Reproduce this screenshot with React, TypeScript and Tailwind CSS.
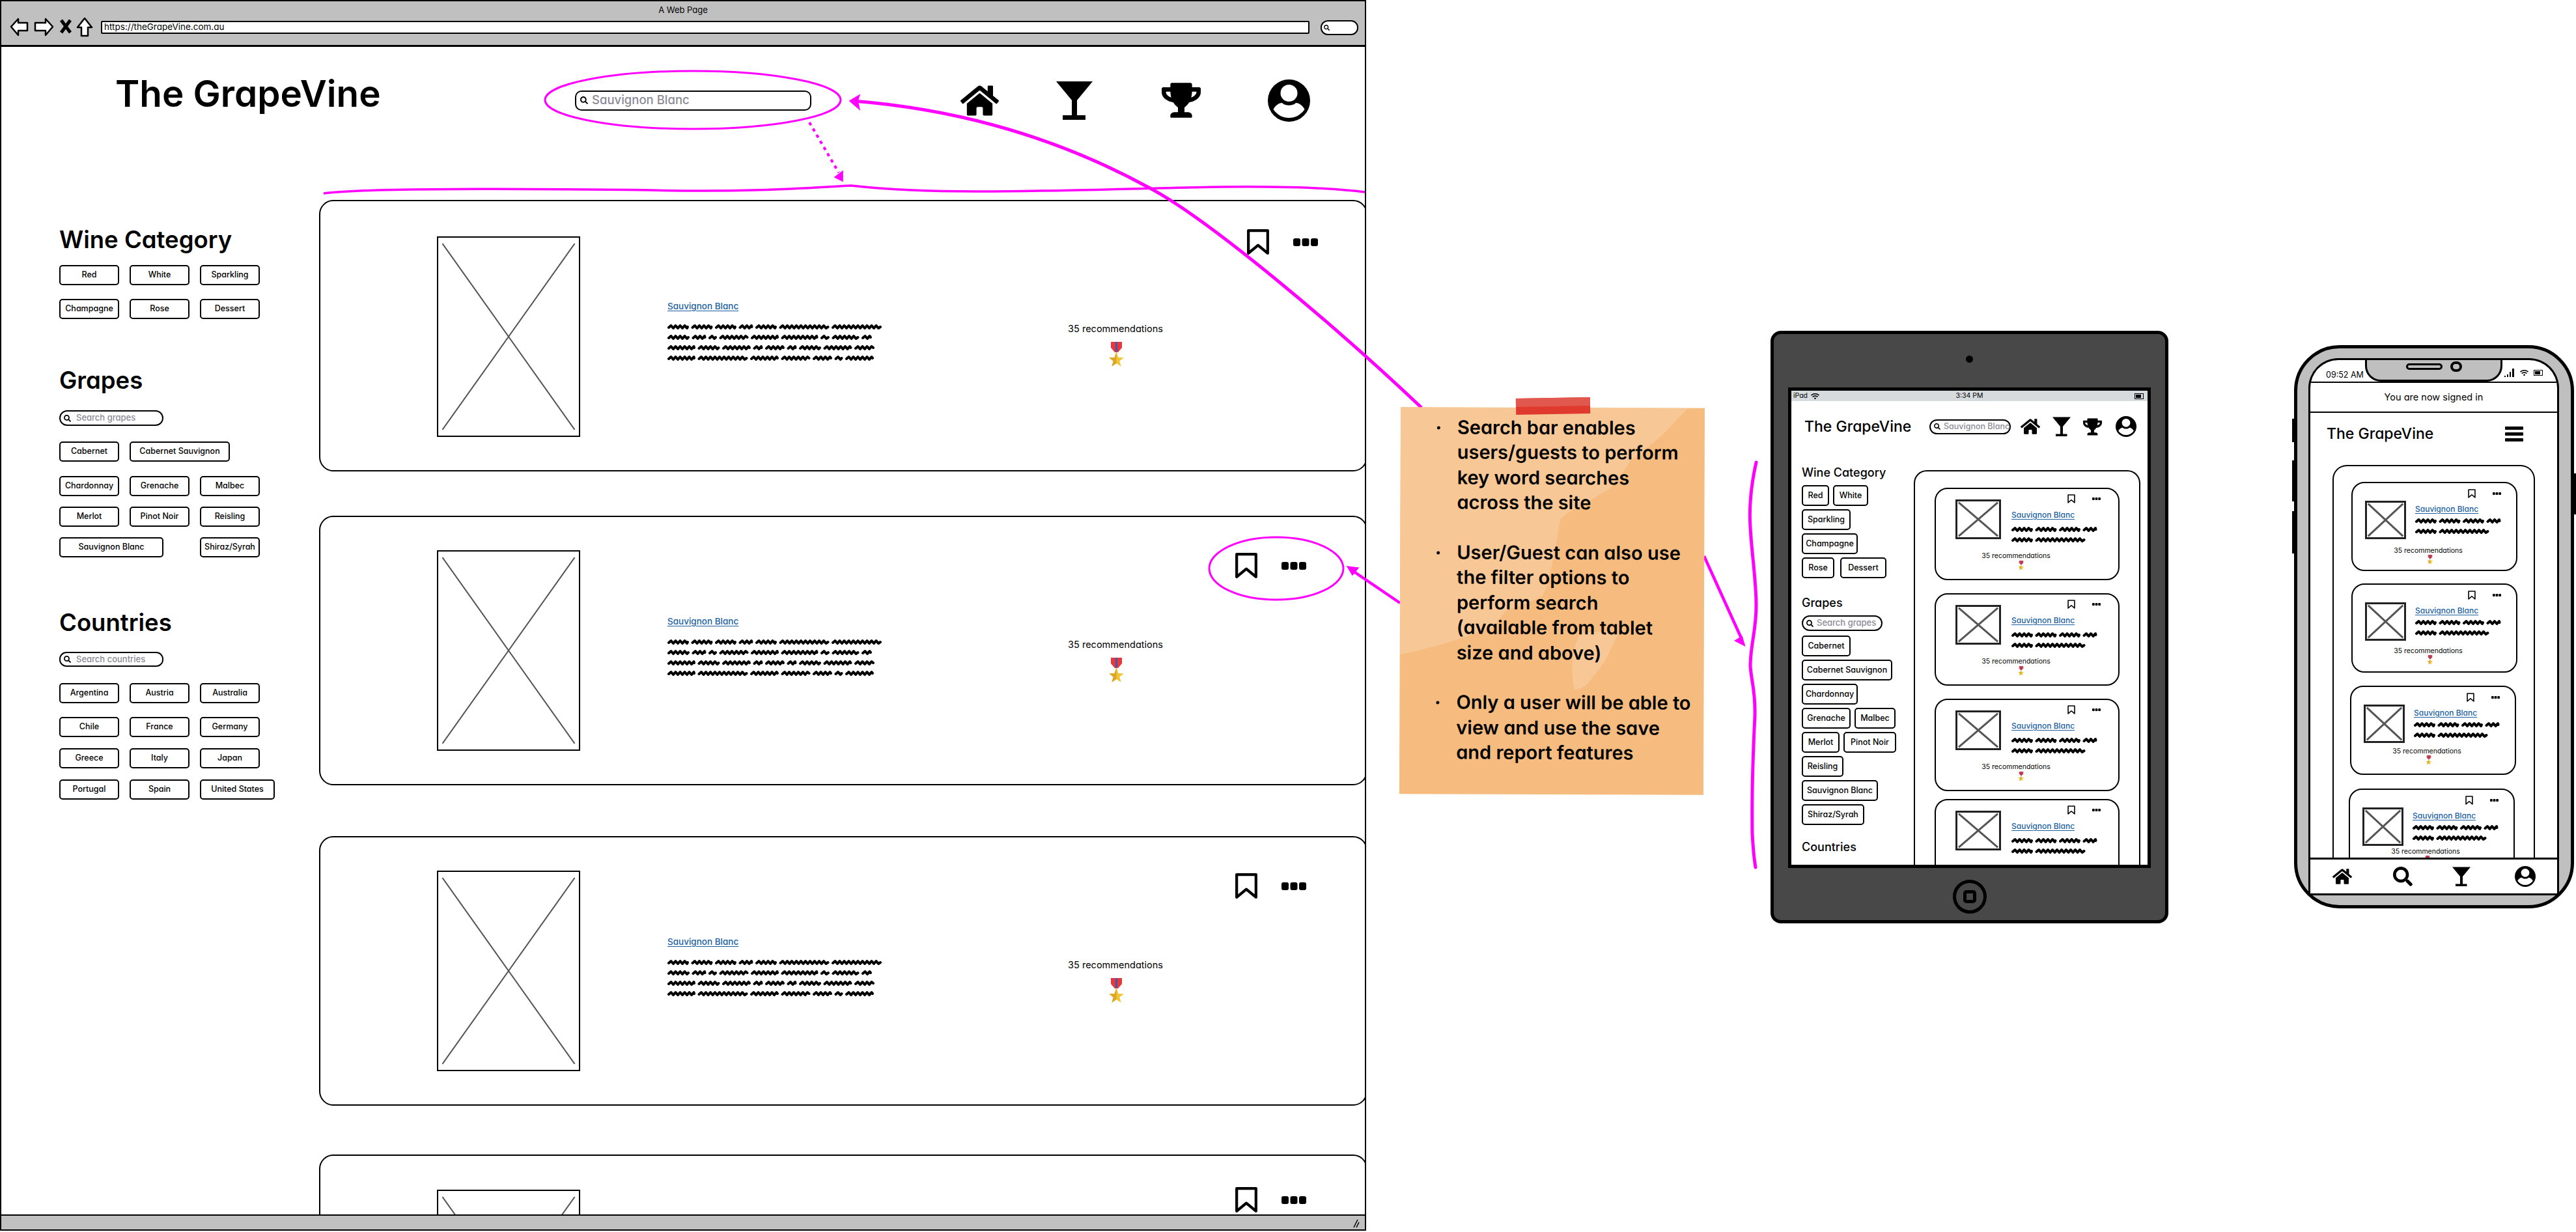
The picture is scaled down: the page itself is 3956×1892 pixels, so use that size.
import { FaHome, FaSearch, FaTrophy, FaWifi } from 'react-icons/fa';

const SCRIBBLE_LINES = [
  [31, 31, 31, 20, 31, 75, 75],
  [32, 20, 11, 43, 41, 55, 12, 40, 14],
  [41, 32, 42, 13, 28, 13, 32, 42, 29],
  [41, 75, 42, 43, 28, 11, 42],
];
const MINI_LINES = [
  [31, 31, 31, 20],
  [31, 75],
];

// blurred "lorem ipsum" line, one short zigzag per word
function Scribble({ words }: { words: number[] }) {
  let x = 2;
  let d = '';
  words.forEach((w) => {
    d += `M${x} 6`;
    let up = true;
    for (let i = 3.5; i < w - 2; i += 3.5) {
      d += `L${x + i} ${up ? 3 : 7}`;
      up = !up;
    }
    d += `L${x + w - 2} 5 `;
    x += w + 5.5;
  });
  return (
    <svg width={x} height="10" className="block">
      <path d={d} fill="none" stroke="black" strokeWidth="4" strokeLinecap="round" strokeLinejoin="round" />
    </svg>
  );
}

function Medal({ className }: { className: string }) {
  return (
    <svg viewBox="0 0 23 40" className={className}>
      <path d="M3 0H20V9L14 16H9L3 9Z" fill="#e8383d" />
      <rect x="10" y="0" width="3" height="15" fill="#3b5ca8" />
      <polygon points="11.5,15 14.4,24 22.9,24.3 16.3,29.6 18.6,37.7 11.5,33 4.4,37.7 6.7,29.6 0.1,24.3 8.6,24" fill="#f3c432" />
      <polygon points="11.5,15 11.5,33 4.4,37.7 6.7,29.6 0.1,24.3 8.6,24" fill="#dca626" />
    </svg>
  );
}

function Bookmark({ className, width = 4 }: { className: string; width?: number }) {
  return (
    <svg viewBox="0 0 34 40" preserveAspectRatio="none" className={className}>
      <path d="M3 3H31V37L17 25L3 37Z" fill="none" stroke="black" strokeWidth={width} strokeLinejoin="round" />
    </svg>
  );
}

function Dots({ className }: { className: string }) {
  return (
    <svg viewBox="0 0 38 12" preserveAspectRatio="none" className={className}>
      <rect x="0" width="11" height="12" rx="3" />
      <rect x="13.5" width="11" height="12" rx="3" />
      <rect x="27" width="11" height="12" rx="3" />
    </svg>
  );
}

function Glass({ className }: { className: string }) {
  return (
    <svg viewBox="0 0 60 60" className={className}>
      <path d="M2 1H58L34 30V53H47V60H12V53H26V30Z" />
    </svg>
  );
}

function UserIcon({ className }: { className: string }) {
  return (
    <svg viewBox="0 0 65 65" className={className}>
      <circle cx="32.5" cy="32.5" r="32.5" />
      <ellipse cx="32.5" cy="21" rx="13" ry="13" fill="white" />
      <path d="M8.5 46C12 39 18 36 22 36C26 41 39 41 43 36C47 36 53 39 56.5 46C50 55 42 59 32.5 59C23 59 15 55 8.5 46Z" fill="white" />
    </svg>
  );
}

function Placeholder({ className, line }: { className: string; line: number }) {
  return (
    <div className={`relative shrink-0 bg-white ${className}`}>
      <svg viewBox="0 0 100 100" preserveAspectRatio="none" className="absolute inset-0 h-full w-full">
        <path d="M3 3L97 97M97 3L3 97" stroke="#555" strokeWidth={line} vectorEffect="non-scaling-stroke" fill="none" />
      </svg>
    </div>
  );
}

function Chip({ label, w = 'w-[92px]', h = 'h-[31px]', extra = '' }: { label: string; w?: string; h?: string; extra?: string }) {
  return (
    <div className={`flex shrink-0 items-center justify-center rounded-[5px] border-2 border-black text-[12.5px] font-medium whitespace-nowrap ${w} ${h} ${extra}`}>
      {label}
    </div>
  );
}

function SearchPill({ text, className, size, icon }: { text: string; className: string; size: string; icon: number }) {
  return (
    <div className={`flex items-center border-2 border-black bg-white font-medium text-[#8b8b96] whitespace-nowrap ${className}`}>
      <FaSearch size={icon} className="shrink-0 text-black" />
      <span className={size}>{text}</span>
    </div>
  );
}

type CardPos = { wrap: string; image: string; text: string; rec: string; icons: string; clipped?: boolean };

function DesktopCard({ wrap, image, text, rec, icons, clipped }: CardPos) {
  return (
    <div className={`flex w-[1610px] shrink-0 items-start rounded-[22px] border-2 border-black bg-white ${wrap}`}>
      <Placeholder className={`ml-[179px] h-[308px] w-[220px] border-2 border-black ${image}`} line={2} />
      <div className={`ml-[134px] w-[327px] shrink-0 ${text}`}>
        {!clipped && (
          <>
            <a className="block text-[13.5px] leading-[18px] font-medium text-[#1b5fa3] underline underline-offset-2">Sauvignon Blanc</a>
            <div className="mt-[18px] flex flex-col gap-[6px]">
              {SCRIBBLE_LINES.map((line, i) => (
                <Scribble key={i} words={line} />
              ))}
            </div>
          </>
        )}
      </div>
      <div className={`ml-[290px] flex w-[142px] shrink-0 flex-col items-center ${rec}`}>
        {!clipped && (
          <>
            <div className="text-[14.5px] leading-[20px] whitespace-nowrap">35 recommendations</div>
            <Medal className="mt-[10px] ml-[3px] h-[40px] w-[23px]" />
          </>
        )}
      </div>
      <div className={`flex shrink-0 items-center ${icons}`}>
        <Bookmark className="h-[41px] w-[36px]" />
        <Dots className="ml-[36px] h-[12px] w-[38px]" />
      </div>
    </div>
  );
}

function MiniCard({ card, image, gap, iconsRow, linkGap, textGap, recBox, medal, hideRec }: {
  card: string; image: string; gap: string; iconsRow: string; linkGap: string; textGap: string; recBox: string; medal: string; hideRec?: boolean;
}) {
  return (
    <div className={`shrink-0 rounded-[20px] border-2 border-black bg-white ${card}`}>
      <div className="flex items-start">
        <Placeholder className={`border-[3px] border-[#222] ${image}`} line={3} />
        <div className={gap}>
          <div className={`flex items-center ${iconsRow}`}>
            <Bookmark className="h-[14px] w-[12px]" width={4.5} />
            <Dots className="ml-[26px] h-[4px] w-[13px]" />
          </div>
          <a className={`block text-[12px] leading-[17px] font-medium text-[#1b5fa3] underline underline-offset-2 ${linkGap}`}>Sauvignon Blanc</a>
          <div className={`flex flex-col gap-[6px] ${textGap}`}>
            {MINI_LINES.map((line, i) => (
              <Scribble key={i} words={line} />
            ))}
          </div>
        </div>
      </div>
      {!hideRec && (
        <div className={`flex w-[96px] flex-col items-center ${recBox}`}>
          <div className="text-[10.5px] leading-[14px] whitespace-nowrap">35 recommendations</div>
          <Medal className={`h-[15px] w-[10px] ${medal}`} />
        </div>
      )}
    </div>
  );
}

function BrowserWindow() {
  const positions: CardPos[] = [
    { wrap: 'h-[417px] mt-[71px]', image: 'mt-[54px]', text: 'mt-[152px]', rec: 'mt-[186px]', icons: 'ml-[130px] mt-[42px]' },
    { wrap: 'h-[414px] mt-[68px]', image: 'mt-[51px]', text: 'mt-[151px]', rec: 'mt-[186px]', icons: 'ml-[112px] mt-[54px]' },
    { wrap: 'h-[414px] mt-[78px]', image: 'mt-[51px]', text: 'mt-[151px]', rec: 'mt-[186px]', icons: 'ml-[112px] mt-[54px]' },
    { wrap: 'h-[414px] mt-[75px]', image: 'mt-[52px]', text: 'mt-[151px]', rec: 'mt-[186px]', icons: 'ml-[112px] mt-[47px]', clipped: true },
  ];
  const heading = 'text-[36.5px] leading-[40px] font-semibold';
  return (
    <div className="absolute top-0 left-0 flex h-[1890px] w-[2098px] flex-col overflow-hidden border-2 border-black bg-white">
      {/* browser chrome */}
      <div className="h-[70px] shrink-0 border-b-[3px] border-black bg-[#c0c0c0]">
        <div className="pt-[3px] text-center text-[13px] leading-[20px]">A Web Page</div>
        <div className="mt-[2px] flex items-center pl-[13px]">
          <svg width="140" height="30" viewBox="0 0 140 30" className="shrink-0">
            <path d="M2 14L13 2V8H27V20H13V27Z" fill="white" stroke="black" strokeWidth="2.5" strokeLinejoin="round" />
            <path d="M66 14L55 2V8H39V20H55V27Z" fill="white" stroke="black" strokeWidth="2.5" strokeLinejoin="round" />
            <path d="M79 4L93 23M93 4L79 23" stroke="black" strokeWidth="5" />
            <path d="M115 1L126 15H120V28H110V15H104Z" fill="white" stroke="black" strokeWidth="2.5" strokeLinejoin="round" />
          </svg>
          <div className="flex h-[20px] w-[1856px] items-center rounded-[2px] border-2 border-black bg-white pl-[3px] text-[13.5px] leading-none">
            https://theGrapeVine.com.au
          </div>
          <div className="ml-[17px] flex h-[23px] w-[58px] items-center rounded-[11px] border-2 border-black bg-white pl-[3px]">
            <FaSearch size={9} />
          </div>
        </div>
      </div>

      <div className="min-h-0 flex-1 overflow-hidden">
        <header className="flex h-[164px] items-center">
          <h1 className="mb-[20px] ml-[175px] w-[706px] shrink-0 text-[56.5px] leading-none font-semibold whitespace-nowrap">The GrapeVine</h1>
          <SearchPill text="Sauvignon Blanc" className="h-[31px] w-[363px] shrink-0 rounded-[10px] pl-[6px]" size="ml-[6px] text-[18.5px]" icon={12} />
          <FaHome size={59} className="ml-[229px] shrink-0" />
          <Glass className="ml-[86px] h-[60px] w-[60px] shrink-0" />
          <FaTrophy size={60} className="ml-[104px] shrink-0" />
          <UserIcon className="ml-[103px] h-[65px] w-[65px] shrink-0" />
        </header>

        <div className="flex items-start">
          <aside className="w-[488px] shrink-0 pt-[112px] pl-[89px]">
            <h2 className={heading}>Wine Category</h2>
            <div className="mt-[19px] flex gap-4"><Chip label="Red" /><Chip label="White" /><Chip label="Sparkling" /></div>
            <div className="mt-[21px] flex gap-4"><Chip label="Champagne" /><Chip label="Rose" /><Chip label="Dessert" /></div>

            <h2 className={`mt-[74px] ${heading}`}>Grapes</h2>
            <SearchPill text="Search grapes" className="mt-[26px] h-[24px] w-[160px] rounded-[12px] pl-[5px]" size="ml-[8px] text-[13px]" icon={11} />
            <div className="mt-[24px] flex gap-4"><Chip label="Cabernet" /><Chip label="Cabernet Sauvignon" w="w-[154px]" /></div>
            <div className="mt-[22px] flex gap-4"><Chip label="Chardonnay" /><Chip label="Grenache" /><Chip label="Malbec" /></div>
            <div className="mt-[16px] flex gap-4"><Chip label="Merlot" /><Chip label="Pinot Noir" /><Chip label="Reisling" /></div>
            <div className="mt-[16px] flex gap-4"><Chip label="Sauvignon Blanc" w="w-[160px]" /><Chip label="Shiraz/Syrah" extra="ml-10" /></div>

            <h2 className={`mt-[80px] ${heading}`}>Countries</h2>
            <SearchPill text="Search countries" className="mt-[25px] h-[23px] w-[160px] rounded-[11px] pl-[5px]" size="ml-[8px] text-[13px]" icon={11} />
            <div className="mt-[25px] flex gap-4"><Chip label="Argentina" /><Chip label="Austria" /><Chip label="Australia" /></div>
            <div className="mt-[21px] flex gap-4"><Chip label="Chile" /><Chip label="France" /><Chip label="Germany" /></div>
            <div className="mt-[17px] flex gap-4"><Chip label="Greece" /><Chip label="Italy" /><Chip label="Japan" /></div>
            <div className="mt-[17px] flex gap-4"><Chip label="Portugal" /><Chip label="Spain" /><Chip label="United States" w="w-[115px]" /></div>
          </aside>
          <main className="flex flex-col">
            {positions.map((p, i) => (
              <DesktopCard key={i} {...p} />
            ))}
          </main>
        </div>
      </div>

      <div className="relative h-[23px] shrink-0 border-t-[2px] border-black bg-[#c0c0c0]">
        <svg width="10" height="14" className="absolute right-[8px] bottom-[2px]">
          <path d="M1 13L7 1M5 13L9 5" stroke="black" strokeWidth="1.5" />
        </svg>
      </div>
    </div>
  );
}

function Tablet() {
  const miniCards = ['mt-[25px]', 'mt-[20px]', 'mt-[20px]', 'mt-[12px]'];
  const row = 'mt-[5px] flex gap-1.5';
  const tall = 'h-[32px]';
  return (
    <div className="absolute top-[508px] left-[2719px] flex h-[910px] w-[611px] flex-col items-center rounded-[16px] border-[5px] border-black bg-[#484848]">
      <div className="mt-[33px] h-[11px] w-[11px] rounded-full bg-black" />
      <div className="mt-[38px] flex h-[738px] w-[557px] flex-col overflow-hidden border-[5px] border-black bg-white">
        <div className="flex h-[16px] shrink-0 items-center justify-between bg-[#d6dbde] px-[3px] text-[10.5px]">
          <div className="flex w-[60px] items-center gap-[5px]">iPad<FaWifi size={13} /></div>
          <div>3:34 PM</div>
          <div className="flex w-[60px] justify-end pr-[3px]">
            <div className="h-[9px] w-[14px] border border-black p-px"><div className="h-full w-[8px] bg-black" /></div>
          </div>
        </div>

        <div className="mt-[23px] flex h-[32px] shrink-0 items-center">
          <div className="ml-[20px] w-[192px] shrink-0 text-[23px] font-medium whitespace-nowrap">The GrapeVine</div>
          <SearchPill text="Sauvignon Blanc" className="h-[23px] w-[125px] shrink-0 rounded-[12px] pl-[5px]" size="ml-[5px] text-[12.5px]" icon={10} />
          <FaHome size={30} className="ml-[15px] shrink-0" />
          <Glass className="ml-[18px] h-[30px] w-[30px] shrink-0" />
          <FaTrophy size={29} className="ml-[18px] shrink-0" />
          <UserIcon className="ml-[21px] h-[32px] w-[32px] shrink-0" />
        </div>

        <div className="mt-[42px] flex min-h-0 flex-1 items-start overflow-hidden">
          <aside className="w-[188px] shrink-0 pl-[16px]">
            <h2 className="text-[18px] leading-[26px] font-medium whitespace-nowrap">Wine Category</h2>
            <div className="mt-[6px] flex gap-1.5"><Chip label="Red" w="w-[42px]" h={tall} /><Chip label="White" w="w-[54px]" h={tall} /></div>
            <div className={row}><Chip label="Sparkling" w="w-[75px]" h={tall} /></div>
            <div className={row}><Chip label="Champagne" w="w-[86px]" h={tall} /></div>
            <div className={row}><Chip label="Rose" w="w-[50px]" h={tall} /><Chip label="Dessert" w="w-[71px]" h={tall} extra="ml-[3px]" /></div>

            <h2 className="mt-[25px] text-[18px] leading-[26px] font-medium">Grapes</h2>
            <SearchPill text="Search grapes" className="mt-[6px] h-[24px] w-[124px] rounded-[12px] pl-[5px]" size="ml-[5px] text-[13px]" icon={11} />
            <div className="mt-[7px] flex"><Chip label="Cabernet" w="w-[75px]" h={tall} /></div>
            <div className={row}><Chip label="Cabernet Sauvignon" w="w-[139px]" h={tall} /></div>
            <div className={row}><Chip label="Chardonnay" w="w-[86px]" h={tall} /></div>
            <div className={row}><Chip label="Grenache" w="w-[75px]" h={tall} /><Chip label="Malbec" w="w-[63px]" h={tall} /></div>
            <div className={row}><Chip label="Merlot" w="w-[58px]" h={tall} /><Chip label="Pinot Noir" w="w-[81px]" h={tall} /></div>
            <div className={row}><Chip label="Reisling" w="w-[64px]" h={tall} /></div>
            <div className={row}><Chip label="Sauvignon Blanc" w="w-[117px]" h={tall} /></div>
            <div className={row}><Chip label="Shiraz/Syrah" w="w-[96px]" h={tall} /></div>

            <h2 className="mt-[21px] text-[18px] leading-[26px] font-medium">Countries</h2>
          </aside>
          <div className="mt-[9px] w-[348px] shrink-0 rounded-t-[20px] border-2 border-b-0 border-black pl-[30px] pb-[100px]">
            {miniCards.map((mt, i) => (
              <MiniCard
                key={i}
                card={`h-[142px] w-[284px] pl-[30px] pt-[8px] ${mt}`}
                image="mt-[8px] h-[61px] w-[70px]"
                gap="ml-[16px] w-[150px]"
                iconsRow="pl-[86px]"
                linkGap="mt-[9px]"
                textGap="mt-[9px]"
                recBox="ml-[45px] mt-[13px]"
                medal="ml-[16px]"
                hideRec={i === 3}
              />
            ))}
          </div>
        </div>
      </div>
      <div className="mt-[18px] flex h-[52px] w-[52px] items-center justify-center rounded-full border-[5px] border-black">
        <div className="h-[20px] w-[20px] rounded-[5px] border-[5px] border-black" />
      </div>
    </div>
  );
}

function Phone() {
  const cards = [
    { pos: 'mt-[24px] ml-[27px]', rec: 'mt-[11px]' },
    { pos: 'mt-[19px] ml-[27px]', rec: 'mt-[9px]' },
    { pos: 'mt-[20px] ml-[25px]', rec: 'mt-[6px]' },
    { pos: 'mt-[21px] ml-[23px]', rec: 'mt-[2px]' },
  ];
  return (
    <div className="absolute top-[530px] left-[3523px] h-[865px] w-[430px] rounded-[70px] border-[5px] border-black bg-[#bfbfbf] pt-[15px] pl-[17px]">
      {/* side buttons */}
      <div className="absolute top-[108px] left-[-8px] h-[36px] w-[3px] bg-black" />
      <div className="absolute top-[172px] left-[-8px] h-[63px] w-[3px] bg-black" />
      <div className="absolute top-[250px] left-[-8px] h-[65px] w-[3px] bg-black" />
      <div className="absolute top-[192px] right-[-8px] h-[63px] w-[3px] bg-black" />

      <div className="relative flex h-[825px] w-[385px] flex-col overflow-hidden rounded-t-[46px] border-[3px] border-b-0 border-black bg-white">
        <div className="grid h-[33px] shrink-0 grid-cols-[84px_211px_1fr]">
          <div className="pt-[15px] pl-[24px] text-[12.5px] leading-[16px] whitespace-nowrap">09:52 AM</div>
          <div className="-mt-[3px] flex h-[36px] items-center justify-center gap-[12px] rounded-b-[24px] border-[3px] border-t-0 border-black bg-[#bfbfbf] pb-[8px]">
            <div className="h-[10px] w-[56px] rounded-full border-[3px] border-black" />
            <div className="h-[16px] w-[18px] rounded-full border-[4px] border-black" />
          </div>
          <div className="flex items-center gap-[8px] pt-[5px] pl-[3px]">
            <svg width="16" height="13" viewBox="0 0 16 13"><path d="M0 11h2v2H0zM4 9h2v4H4zM8 5h2v8H8zM12 0h3v13h-3z" /></svg>
            <FaWifi size={13} />
            <div className="h-[9px] w-[14px] border border-black p-px"><div className="h-full w-[8px] bg-black" /></div>
          </div>
        </div>
        <div className="flex h-[48px] shrink-0 items-center justify-center border-y-2 border-black text-[14.5px]">You are now signed in</div>
        <div className="flex h-[64px] shrink-0 items-center justify-between pr-[52px] pl-[25px]">
          <div className="text-[23px] font-medium whitespace-nowrap">The GrapeVine</div>
          <div className="flex w-[28px] flex-col gap-[4px]">
            <div className="h-[5px] rounded-[1px] bg-black" />
            <div className="h-[5px] rounded-[1px] bg-black" />
            <div className="h-[5px] rounded-[1px] bg-black" />
          </div>
        </div>
        <div className="min-h-0 flex-1 overflow-hidden pl-[34px]">
          <div className="mt-[16px] w-[311px] rounded-t-[22px] border-2 border-b-0 border-black pb-[100px]">
            {cards.map((c, i) => (
              <MiniCard
                key={i}
                card={`h-[137px] w-[255px] pl-[19px] pt-[9px] ${c.pos}`}
                image="mt-[18px] h-[59px] w-[63px]"
                gap="ml-[14px] w-[150px]"
                iconsRow="pl-[81px]"
                linkGap="mt-[8px]"
                textGap="mt-[5px]"
                recBox={`ml-[49px] ${c.rec}`}
                medal="ml-[6px] -mt-[1px]"
              />
            ))}
          </div>
        </div>
        <div className="flex h-[58px] shrink-0 items-center border-y-[3px] border-black bg-white">
          <FaHome size={30} className="ml-[34px]" />
          <FaSearch size={30} className="ml-[63px]" />
          <Glass className="ml-[60px] h-[30px] w-[30px]" />
          <UserIcon className="ml-[67px] h-[32px] w-[32px]" />
        </div>
      </div>
    </div>
  );
}

function StickyNote() {
  const notes = [
    ['Search bar enables', 'users/guests to perform', 'key word searches', 'across the site'],
    ['User/Guest can also use', 'the filter options to', 'perform search', '(available from tablet', 'size and above)'],
    ['Only a user will be able to', 'view and use the save', 'and report features'],
  ];
  return (
    <div className="absolute top-[626px] left-[2150px] h-[594px] w-[467px] rotate-[0.2deg] bg-[#f5bb7f] pt-[12px] pl-[56px] text-[29px] leading-[38.4px] font-semibold">
      <svg viewBox="0 0 467 594" className="absolute inset-0 h-full w-full">
        <path d="M0 0H442C420 20 410 40 354 80C340 100 330 120 315 128C280 150 255 160 246 172C242 190 242 200 238 215C232 250 228 270 219 289C200 300 180 305 165 311C155 320 150 330 142 337C100 355 40 372 0 380Z" fill="#f7c796" />
        <path d="M265 389C264 410 266 425 269 433C278 432 282 430 288 424C298 412 308 400 315 389C322 375 330 360 335 346C315 342 295 344 277 346C270 360 266 375 265 389Z" fill="#f7c796" />
      </svg>
      <div className="absolute -top-[15px] left-[177px] h-[25px] w-[114px] -rotate-[1.2deg] bg-[#e03a2f]">
        <div className="h-[13px] bg-[#e0584e]" />
      </div>
      <div className="relative flex flex-col gap-[38.4px]">
        {notes.map((lines, i) => (
          <div key={i} className="flex">
            <div className="mt-[17px] h-[5px] w-[5px] shrink-0 rounded-full bg-black" />
            <div className="ml-[26px] whitespace-nowrap">
              {lines.map((l) => (
                <div key={l}>{l}</div>
              ))}
            </div>
          </div>
        ))}
      </div>
    </div>
  );
}

function Annotations() {
  const pink = '#ff00ff';
  return (
    <svg width="3956" height="1892" viewBox="0 0 3956 1892" className="pointer-events-none absolute inset-0" fill="none" stroke={pink}>
      <ellipse cx="1064" cy="153.5" rx="227" ry="44.5" strokeWidth="3" />
      <ellipse cx="1960" cy="873" rx="103" ry="48" strokeWidth="3" />
      <path d="M2183 626C2050 500 1860 340 1768 290C1650 225 1500 170 1310 155" strokeWidth="5" />
      <path d="M1305 155L1320 146L1317 155L1320 168Z" fill={pink} strokeWidth="1.5" />
      <path d="M1243 188L1288 265" strokeWidth="4" strokeDasharray="5 6" />
      <path d="M1294 278L1282 272L1294 263Z" fill={pink} strokeWidth="1.5" />
      <path d="M497 297C560 288 800 290 1000 292C1150 296 1250 288 1307 285C1370 292 1430 294 1500 294C1650 294 1780 288 1878 287C1980 286 2050 289 2096 295" strokeWidth="3.5" />
      <path d="M2150 926L2075 875" strokeWidth="4.5" />
      <path d="M2069 870L2086 872L2077 883Z" fill={pink} strokeWidth="1.5" />
      <path d="M2617 854L2675 982" strokeWidth="4.5" />
      <path d="M2679 991L2665 984L2675 978Z" fill={pink} strokeWidth="2" />
      <path d="M2697 710C2688 750 2686 780 2688 810C2690 850 2697 890 2697 930C2697 970 2688 990 2688 1023C2690 1050 2696 1060 2695 1100C2692 1160 2690 1220 2691 1280C2692 1300 2694 1320 2696 1332" strokeWidth="5" strokeLinecap="round" />
    </svg>
  );
}

export default function App() {
  return (
    <div className="relative h-[1892px] w-[3956px] overflow-hidden bg-white font-['Inter',sans-serif] text-black [font-feature-settings:'cv11']">
      <BrowserWindow />
      <Tablet />
      <Phone />
      <Annotations />
      <StickyNote />
    </div>
  );
}
